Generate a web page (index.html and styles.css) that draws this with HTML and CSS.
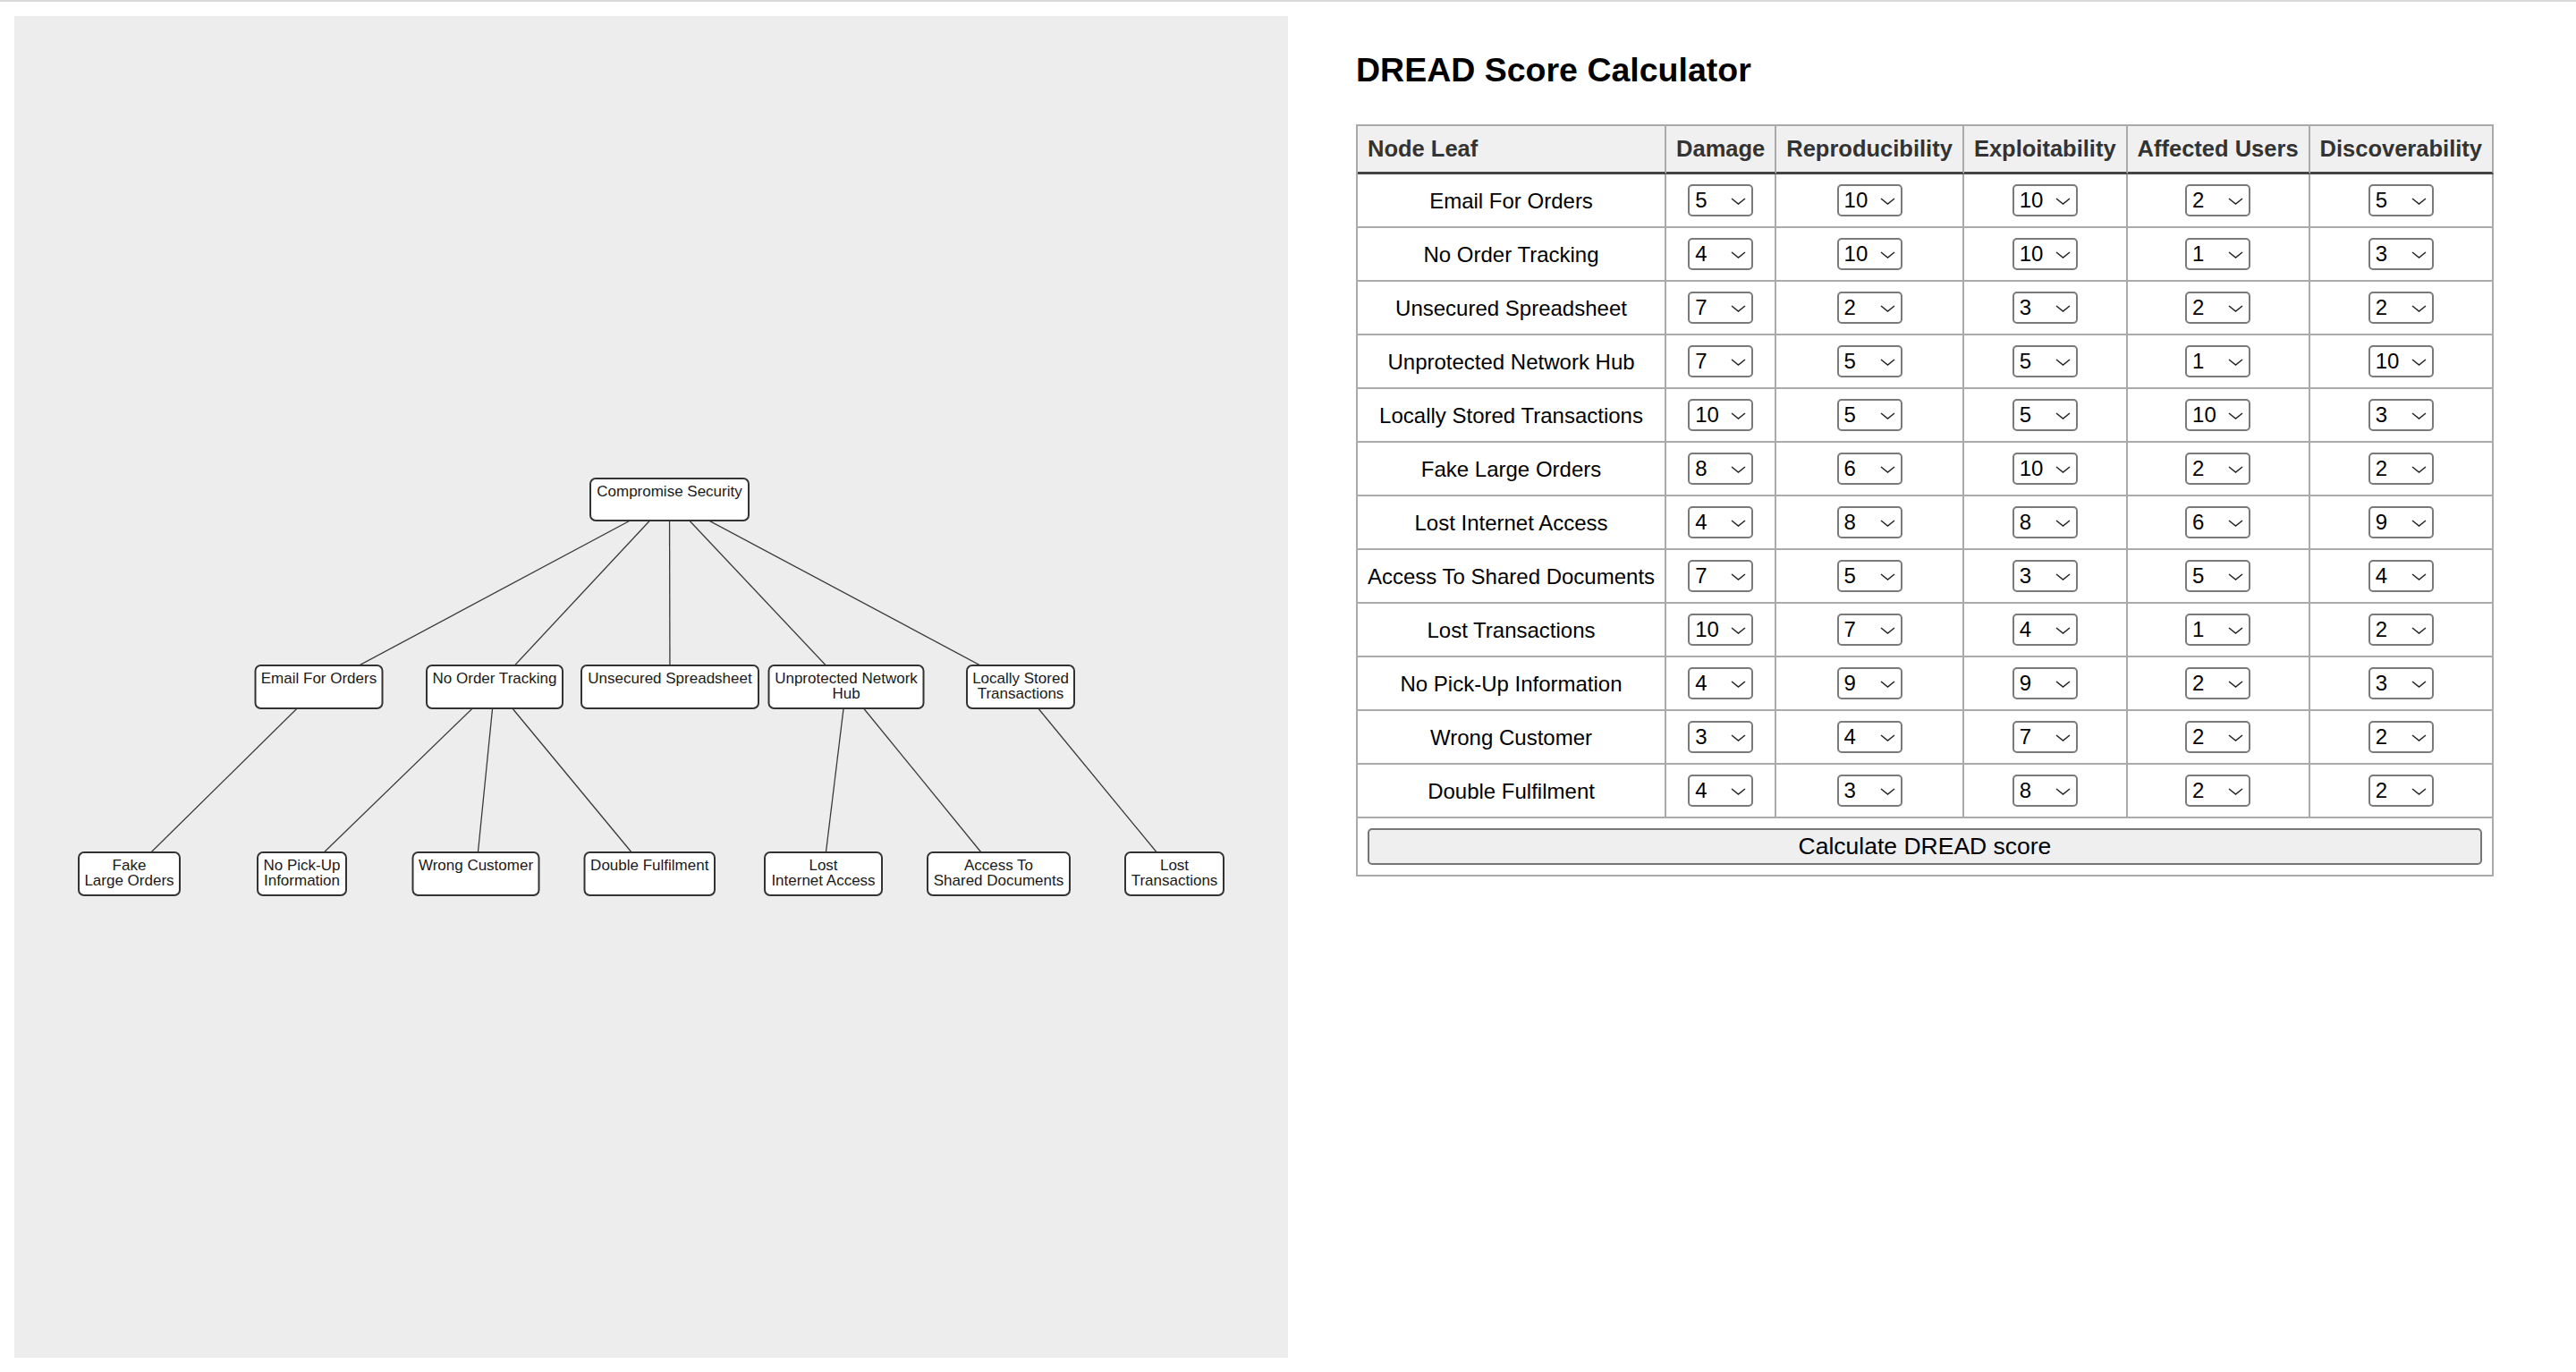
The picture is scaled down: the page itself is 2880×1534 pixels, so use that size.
FILE: index.html
```html
<!DOCTYPE html>
<html lang="en">
<head>
<meta charset="utf-8">
<title>DREAD Score Calculator</title>
<link rel="stylesheet" href="styles.css">
</head>
<body>
<div class="page">
  <section class="tree-panel">
    <svg class="tree" width="1424" height="1500" viewBox="16 18 1424 1500" xmlns="http://www.w3.org/2000/svg">
      <g class="edges">
        <line x1="748.5" y1="558.5" x2="356.5" y2="768"/>
        <line x1="748.5" y1="558.5" x2="553" y2="768"/>
        <line x1="748.5" y1="558.5" x2="749" y2="768"/>
        <line x1="748.5" y1="558.5" x2="946" y2="768"/>
        <line x1="748.5" y1="558.5" x2="1141" y2="768"/>
        <line x1="356.5" y1="768" x2="144.5" y2="977"/>
        <line x1="553" y1="768" x2="337.5" y2="977"/>
        <line x1="553" y1="768" x2="532" y2="977"/>
        <line x1="553" y1="768" x2="726" y2="977"/>
        <line x1="946" y1="768" x2="920.5" y2="977"/>
        <line x1="946" y1="768" x2="1116.5" y2="977"/>
        <line x1="1141" y1="768" x2="1313" y2="977"/>
      </g>
      <g class="nodes">
        <rect x="660" y="535" width="177" height="47" rx="6"/>
        <rect x="285.5" y="744" width="142" height="48" rx="6"/>
        <rect x="477" y="744" width="152" height="48" rx="6"/>
        <rect x="650" y="744" width="198" height="48" rx="6"/>
        <rect x="859.5" y="744" width="173" height="48" rx="6"/>
        <rect x="1081" y="744" width="120" height="48" rx="6"/>
        <rect x="88" y="953" width="113" height="48" rx="6"/>
        <rect x="288" y="953" width="99" height="48" rx="6"/>
        <rect x="461.5" y="953" width="141" height="48" rx="6"/>
        <rect x="653.5" y="953" width="145.5" height="48" rx="6"/>
        <rect x="855" y="953" width="131" height="48" rx="6"/>
        <rect x="1037" y="953" width="159" height="48" rx="6"/>
        <rect x="1258" y="953" width="110" height="48" rx="6"/>
      </g>
      <g class="labels">
        <text x="748.5" y="555">Compromise Security</text>
        <text x="356.5" y="764">Email For Orders</text>
        <text x="553" y="764">No Order Tracking</text>
        <text x="749" y="764">Unsecured Spreadsheet</text>
        <text x="946" y="764"><tspan x="946">Unprotected Network</tspan><tspan x="946" dy="16.5">Hub</tspan></text>
        <text x="1141" y="764"><tspan x="1141">Locally Stored</tspan><tspan x="1141" dy="16.5">Transactions</tspan></text>
        <text x="144.5" y="973"><tspan x="144.5">Fake</tspan><tspan x="144.5" dy="16.5">Large Orders</tspan></text>
        <text x="337.5" y="973"><tspan x="337.5">No Pick-Up</tspan><tspan x="337.5" dy="16.5">Information</tspan></text>
        <text x="532" y="973">Wrong Customer</text>
        <text x="726.25" y="973">Double Fulfilment</text>
        <text x="920.5" y="973"><tspan x="920.5">Lost</tspan><tspan x="920.5" dy="16.5">Internet Access</tspan></text>
        <text x="1116.5" y="973"><tspan x="1116.5">Access To</tspan><tspan x="1116.5" dy="16.5">Shared Documents</tspan></text>
        <text x="1313" y="973"><tspan x="1313">Lost</tspan><tspan x="1313" dy="16.5">Transactions</tspan></text>
      </g>
    </svg>
  </section>

  <section class="calc">
    <h1 class="calc-title">DREAD Score Calculator</h1>
    <table class="dread">
      <thead>
        <tr>
          <th class="th-leaf">Node Leaf</th>
          <th>Damage</th>
          <th>Reproducibility</th>
          <th>Exploitability</th>
          <th>Affected Users</th>
          <th>Discoverability</th>
        </tr>
      </thead>
      <tbody>
        <tr>
          <td>Email For Orders</td>
          <td><span class="sel"><select><option>1</option><option>2</option><option>3</option><option>4</option><option selected>5</option><option>6</option><option>7</option><option>8</option><option>9</option><option>10</option></select><svg class="chev" viewBox="0 0 17 8"><path d="M1 1L8.5 7L16 1"/></svg></span></td>
          <td><span class="sel"><select><option>1</option><option>2</option><option>3</option><option>4</option><option>5</option><option>6</option><option>7</option><option>8</option><option>9</option><option selected>10</option></select><svg class="chev" viewBox="0 0 17 8"><path d="M1 1L8.5 7L16 1"/></svg></span></td>
          <td><span class="sel"><select><option>1</option><option>2</option><option>3</option><option>4</option><option>5</option><option>6</option><option>7</option><option>8</option><option>9</option><option selected>10</option></select><svg class="chev" viewBox="0 0 17 8"><path d="M1 1L8.5 7L16 1"/></svg></span></td>
          <td><span class="sel"><select><option>1</option><option selected>2</option><option>3</option><option>4</option><option>5</option><option>6</option><option>7</option><option>8</option><option>9</option><option>10</option></select><svg class="chev" viewBox="0 0 17 8"><path d="M1 1L8.5 7L16 1"/></svg></span></td>
          <td><span class="sel"><select><option>1</option><option>2</option><option>3</option><option>4</option><option selected>5</option><option>6</option><option>7</option><option>8</option><option>9</option><option>10</option></select><svg class="chev" viewBox="0 0 17 8"><path d="M1 1L8.5 7L16 1"/></svg></span></td>
        </tr>
        <tr>
          <td>No Order Tracking</td>
          <td><span class="sel"><select><option>1</option><option>2</option><option>3</option><option selected>4</option><option>5</option><option>6</option><option>7</option><option>8</option><option>9</option><option>10</option></select><svg class="chev" viewBox="0 0 17 8"><path d="M1 1L8.5 7L16 1"/></svg></span></td>
          <td><span class="sel"><select><option>1</option><option>2</option><option>3</option><option>4</option><option>5</option><option>6</option><option>7</option><option>8</option><option>9</option><option selected>10</option></select><svg class="chev" viewBox="0 0 17 8"><path d="M1 1L8.5 7L16 1"/></svg></span></td>
          <td><span class="sel"><select><option>1</option><option>2</option><option>3</option><option>4</option><option>5</option><option>6</option><option>7</option><option>8</option><option>9</option><option selected>10</option></select><svg class="chev" viewBox="0 0 17 8"><path d="M1 1L8.5 7L16 1"/></svg></span></td>
          <td><span class="sel"><select><option selected>1</option><option>2</option><option>3</option><option>4</option><option>5</option><option>6</option><option>7</option><option>8</option><option>9</option><option>10</option></select><svg class="chev" viewBox="0 0 17 8"><path d="M1 1L8.5 7L16 1"/></svg></span></td>
          <td><span class="sel"><select><option>1</option><option>2</option><option selected>3</option><option>4</option><option>5</option><option>6</option><option>7</option><option>8</option><option>9</option><option>10</option></select><svg class="chev" viewBox="0 0 17 8"><path d="M1 1L8.5 7L16 1"/></svg></span></td>
        </tr>
        <tr>
          <td>Unsecured Spreadsheet</td>
          <td><span class="sel"><select><option>1</option><option>2</option><option>3</option><option>4</option><option>5</option><option>6</option><option selected>7</option><option>8</option><option>9</option><option>10</option></select><svg class="chev" viewBox="0 0 17 8"><path d="M1 1L8.5 7L16 1"/></svg></span></td>
          <td><span class="sel"><select><option>1</option><option selected>2</option><option>3</option><option>4</option><option>5</option><option>6</option><option>7</option><option>8</option><option>9</option><option>10</option></select><svg class="chev" viewBox="0 0 17 8"><path d="M1 1L8.5 7L16 1"/></svg></span></td>
          <td><span class="sel"><select><option>1</option><option>2</option><option selected>3</option><option>4</option><option>5</option><option>6</option><option>7</option><option>8</option><option>9</option><option>10</option></select><svg class="chev" viewBox="0 0 17 8"><path d="M1 1L8.5 7L16 1"/></svg></span></td>
          <td><span class="sel"><select><option>1</option><option selected>2</option><option>3</option><option>4</option><option>5</option><option>6</option><option>7</option><option>8</option><option>9</option><option>10</option></select><svg class="chev" viewBox="0 0 17 8"><path d="M1 1L8.5 7L16 1"/></svg></span></td>
          <td><span class="sel"><select><option>1</option><option selected>2</option><option>3</option><option>4</option><option>5</option><option>6</option><option>7</option><option>8</option><option>9</option><option>10</option></select><svg class="chev" viewBox="0 0 17 8"><path d="M1 1L8.5 7L16 1"/></svg></span></td>
        </tr>
        <tr>
          <td>Unprotected Network Hub</td>
          <td><span class="sel"><select><option>1</option><option>2</option><option>3</option><option>4</option><option>5</option><option>6</option><option selected>7</option><option>8</option><option>9</option><option>10</option></select><svg class="chev" viewBox="0 0 17 8"><path d="M1 1L8.5 7L16 1"/></svg></span></td>
          <td><span class="sel"><select><option>1</option><option>2</option><option>3</option><option>4</option><option selected>5</option><option>6</option><option>7</option><option>8</option><option>9</option><option>10</option></select><svg class="chev" viewBox="0 0 17 8"><path d="M1 1L8.5 7L16 1"/></svg></span></td>
          <td><span class="sel"><select><option>1</option><option>2</option><option>3</option><option>4</option><option selected>5</option><option>6</option><option>7</option><option>8</option><option>9</option><option>10</option></select><svg class="chev" viewBox="0 0 17 8"><path d="M1 1L8.5 7L16 1"/></svg></span></td>
          <td><span class="sel"><select><option selected>1</option><option>2</option><option>3</option><option>4</option><option>5</option><option>6</option><option>7</option><option>8</option><option>9</option><option>10</option></select><svg class="chev" viewBox="0 0 17 8"><path d="M1 1L8.5 7L16 1"/></svg></span></td>
          <td><span class="sel"><select><option>1</option><option>2</option><option>3</option><option>4</option><option>5</option><option>6</option><option>7</option><option>8</option><option>9</option><option selected>10</option></select><svg class="chev" viewBox="0 0 17 8"><path d="M1 1L8.5 7L16 1"/></svg></span></td>
        </tr>
        <tr>
          <td>Locally Stored Transactions</td>
          <td><span class="sel"><select><option>1</option><option>2</option><option>3</option><option>4</option><option>5</option><option>6</option><option>7</option><option>8</option><option>9</option><option selected>10</option></select><svg class="chev" viewBox="0 0 17 8"><path d="M1 1L8.5 7L16 1"/></svg></span></td>
          <td><span class="sel"><select><option>1</option><option>2</option><option>3</option><option>4</option><option selected>5</option><option>6</option><option>7</option><option>8</option><option>9</option><option>10</option></select><svg class="chev" viewBox="0 0 17 8"><path d="M1 1L8.5 7L16 1"/></svg></span></td>
          <td><span class="sel"><select><option>1</option><option>2</option><option>3</option><option>4</option><option selected>5</option><option>6</option><option>7</option><option>8</option><option>9</option><option>10</option></select><svg class="chev" viewBox="0 0 17 8"><path d="M1 1L8.5 7L16 1"/></svg></span></td>
          <td><span class="sel"><select><option>1</option><option>2</option><option>3</option><option>4</option><option>5</option><option>6</option><option>7</option><option>8</option><option>9</option><option selected>10</option></select><svg class="chev" viewBox="0 0 17 8"><path d="M1 1L8.5 7L16 1"/></svg></span></td>
          <td><span class="sel"><select><option>1</option><option>2</option><option selected>3</option><option>4</option><option>5</option><option>6</option><option>7</option><option>8</option><option>9</option><option>10</option></select><svg class="chev" viewBox="0 0 17 8"><path d="M1 1L8.5 7L16 1"/></svg></span></td>
        </tr>
        <tr>
          <td>Fake Large Orders</td>
          <td><span class="sel"><select><option>1</option><option>2</option><option>3</option><option>4</option><option>5</option><option>6</option><option>7</option><option selected>8</option><option>9</option><option>10</option></select><svg class="chev" viewBox="0 0 17 8"><path d="M1 1L8.5 7L16 1"/></svg></span></td>
          <td><span class="sel"><select><option>1</option><option>2</option><option>3</option><option>4</option><option>5</option><option selected>6</option><option>7</option><option>8</option><option>9</option><option>10</option></select><svg class="chev" viewBox="0 0 17 8"><path d="M1 1L8.5 7L16 1"/></svg></span></td>
          <td><span class="sel"><select><option>1</option><option>2</option><option>3</option><option>4</option><option>5</option><option>6</option><option>7</option><option>8</option><option>9</option><option selected>10</option></select><svg class="chev" viewBox="0 0 17 8"><path d="M1 1L8.5 7L16 1"/></svg></span></td>
          <td><span class="sel"><select><option>1</option><option selected>2</option><option>3</option><option>4</option><option>5</option><option>6</option><option>7</option><option>8</option><option>9</option><option>10</option></select><svg class="chev" viewBox="0 0 17 8"><path d="M1 1L8.5 7L16 1"/></svg></span></td>
          <td><span class="sel"><select><option>1</option><option selected>2</option><option>3</option><option>4</option><option>5</option><option>6</option><option>7</option><option>8</option><option>9</option><option>10</option></select><svg class="chev" viewBox="0 0 17 8"><path d="M1 1L8.5 7L16 1"/></svg></span></td>
        </tr>
        <tr>
          <td>Lost Internet Access</td>
          <td><span class="sel"><select><option>1</option><option>2</option><option>3</option><option selected>4</option><option>5</option><option>6</option><option>7</option><option>8</option><option>9</option><option>10</option></select><svg class="chev" viewBox="0 0 17 8"><path d="M1 1L8.5 7L16 1"/></svg></span></td>
          <td><span class="sel"><select><option>1</option><option>2</option><option>3</option><option>4</option><option>5</option><option>6</option><option>7</option><option selected>8</option><option>9</option><option>10</option></select><svg class="chev" viewBox="0 0 17 8"><path d="M1 1L8.5 7L16 1"/></svg></span></td>
          <td><span class="sel"><select><option>1</option><option>2</option><option>3</option><option>4</option><option>5</option><option>6</option><option>7</option><option selected>8</option><option>9</option><option>10</option></select><svg class="chev" viewBox="0 0 17 8"><path d="M1 1L8.5 7L16 1"/></svg></span></td>
          <td><span class="sel"><select><option>1</option><option>2</option><option>3</option><option>4</option><option>5</option><option selected>6</option><option>7</option><option>8</option><option>9</option><option>10</option></select><svg class="chev" viewBox="0 0 17 8"><path d="M1 1L8.5 7L16 1"/></svg></span></td>
          <td><span class="sel"><select><option>1</option><option>2</option><option>3</option><option>4</option><option>5</option><option>6</option><option>7</option><option>8</option><option selected>9</option><option>10</option></select><svg class="chev" viewBox="0 0 17 8"><path d="M1 1L8.5 7L16 1"/></svg></span></td>
        </tr>
        <tr>
          <td>Access To Shared Documents</td>
          <td><span class="sel"><select><option>1</option><option>2</option><option>3</option><option>4</option><option>5</option><option>6</option><option selected>7</option><option>8</option><option>9</option><option>10</option></select><svg class="chev" viewBox="0 0 17 8"><path d="M1 1L8.5 7L16 1"/></svg></span></td>
          <td><span class="sel"><select><option>1</option><option>2</option><option>3</option><option>4</option><option selected>5</option><option>6</option><option>7</option><option>8</option><option>9</option><option>10</option></select><svg class="chev" viewBox="0 0 17 8"><path d="M1 1L8.5 7L16 1"/></svg></span></td>
          <td><span class="sel"><select><option>1</option><option>2</option><option selected>3</option><option>4</option><option>5</option><option>6</option><option>7</option><option>8</option><option>9</option><option>10</option></select><svg class="chev" viewBox="0 0 17 8"><path d="M1 1L8.5 7L16 1"/></svg></span></td>
          <td><span class="sel"><select><option>1</option><option>2</option><option>3</option><option>4</option><option selected>5</option><option>6</option><option>7</option><option>8</option><option>9</option><option>10</option></select><svg class="chev" viewBox="0 0 17 8"><path d="M1 1L8.5 7L16 1"/></svg></span></td>
          <td><span class="sel"><select><option>1</option><option>2</option><option>3</option><option selected>4</option><option>5</option><option>6</option><option>7</option><option>8</option><option>9</option><option>10</option></select><svg class="chev" viewBox="0 0 17 8"><path d="M1 1L8.5 7L16 1"/></svg></span></td>
        </tr>
        <tr>
          <td>Lost Transactions</td>
          <td><span class="sel"><select><option>1</option><option>2</option><option>3</option><option>4</option><option>5</option><option>6</option><option>7</option><option>8</option><option>9</option><option selected>10</option></select><svg class="chev" viewBox="0 0 17 8"><path d="M1 1L8.5 7L16 1"/></svg></span></td>
          <td><span class="sel"><select><option>1</option><option>2</option><option>3</option><option>4</option><option>5</option><option>6</option><option selected>7</option><option>8</option><option>9</option><option>10</option></select><svg class="chev" viewBox="0 0 17 8"><path d="M1 1L8.5 7L16 1"/></svg></span></td>
          <td><span class="sel"><select><option>1</option><option>2</option><option>3</option><option selected>4</option><option>5</option><option>6</option><option>7</option><option>8</option><option>9</option><option>10</option></select><svg class="chev" viewBox="0 0 17 8"><path d="M1 1L8.5 7L16 1"/></svg></span></td>
          <td><span class="sel"><select><option selected>1</option><option>2</option><option>3</option><option>4</option><option>5</option><option>6</option><option>7</option><option>8</option><option>9</option><option>10</option></select><svg class="chev" viewBox="0 0 17 8"><path d="M1 1L8.5 7L16 1"/></svg></span></td>
          <td><span class="sel"><select><option>1</option><option selected>2</option><option>3</option><option>4</option><option>5</option><option>6</option><option>7</option><option>8</option><option>9</option><option>10</option></select><svg class="chev" viewBox="0 0 17 8"><path d="M1 1L8.5 7L16 1"/></svg></span></td>
        </tr>
        <tr>
          <td>No Pick-Up Information</td>
          <td><span class="sel"><select><option>1</option><option>2</option><option>3</option><option selected>4</option><option>5</option><option>6</option><option>7</option><option>8</option><option>9</option><option>10</option></select><svg class="chev" viewBox="0 0 17 8"><path d="M1 1L8.5 7L16 1"/></svg></span></td>
          <td><span class="sel"><select><option>1</option><option>2</option><option>3</option><option>4</option><option>5</option><option>6</option><option>7</option><option>8</option><option selected>9</option><option>10</option></select><svg class="chev" viewBox="0 0 17 8"><path d="M1 1L8.5 7L16 1"/></svg></span></td>
          <td><span class="sel"><select><option>1</option><option>2</option><option>3</option><option>4</option><option>5</option><option>6</option><option>7</option><option>8</option><option selected>9</option><option>10</option></select><svg class="chev" viewBox="0 0 17 8"><path d="M1 1L8.5 7L16 1"/></svg></span></td>
          <td><span class="sel"><select><option>1</option><option selected>2</option><option>3</option><option>4</option><option>5</option><option>6</option><option>7</option><option>8</option><option>9</option><option>10</option></select><svg class="chev" viewBox="0 0 17 8"><path d="M1 1L8.5 7L16 1"/></svg></span></td>
          <td><span class="sel"><select><option>1</option><option>2</option><option selected>3</option><option>4</option><option>5</option><option>6</option><option>7</option><option>8</option><option>9</option><option>10</option></select><svg class="chev" viewBox="0 0 17 8"><path d="M1 1L8.5 7L16 1"/></svg></span></td>
        </tr>
        <tr>
          <td>Wrong Customer</td>
          <td><span class="sel"><select><option>1</option><option>2</option><option selected>3</option><option>4</option><option>5</option><option>6</option><option>7</option><option>8</option><option>9</option><option>10</option></select><svg class="chev" viewBox="0 0 17 8"><path d="M1 1L8.5 7L16 1"/></svg></span></td>
          <td><span class="sel"><select><option>1</option><option>2</option><option>3</option><option selected>4</option><option>5</option><option>6</option><option>7</option><option>8</option><option>9</option><option>10</option></select><svg class="chev" viewBox="0 0 17 8"><path d="M1 1L8.5 7L16 1"/></svg></span></td>
          <td><span class="sel"><select><option>1</option><option>2</option><option>3</option><option>4</option><option>5</option><option>6</option><option selected>7</option><option>8</option><option>9</option><option>10</option></select><svg class="chev" viewBox="0 0 17 8"><path d="M1 1L8.5 7L16 1"/></svg></span></td>
          <td><span class="sel"><select><option>1</option><option selected>2</option><option>3</option><option>4</option><option>5</option><option>6</option><option>7</option><option>8</option><option>9</option><option>10</option></select><svg class="chev" viewBox="0 0 17 8"><path d="M1 1L8.5 7L16 1"/></svg></span></td>
          <td><span class="sel"><select><option>1</option><option selected>2</option><option>3</option><option>4</option><option>5</option><option>6</option><option>7</option><option>8</option><option>9</option><option>10</option></select><svg class="chev" viewBox="0 0 17 8"><path d="M1 1L8.5 7L16 1"/></svg></span></td>
        </tr>
        <tr>
          <td>Double Fulfilment</td>
          <td><span class="sel"><select><option>1</option><option>2</option><option>3</option><option selected>4</option><option>5</option><option>6</option><option>7</option><option>8</option><option>9</option><option>10</option></select><svg class="chev" viewBox="0 0 17 8"><path d="M1 1L8.5 7L16 1"/></svg></span></td>
          <td><span class="sel"><select><option>1</option><option>2</option><option selected>3</option><option>4</option><option>5</option><option>6</option><option>7</option><option>8</option><option>9</option><option>10</option></select><svg class="chev" viewBox="0 0 17 8"><path d="M1 1L8.5 7L16 1"/></svg></span></td>
          <td><span class="sel"><select><option>1</option><option>2</option><option>3</option><option>4</option><option>5</option><option>6</option><option>7</option><option selected>8</option><option>9</option><option>10</option></select><svg class="chev" viewBox="0 0 17 8"><path d="M1 1L8.5 7L16 1"/></svg></span></td>
          <td><span class="sel"><select><option>1</option><option selected>2</option><option>3</option><option>4</option><option>5</option><option>6</option><option>7</option><option>8</option><option>9</option><option>10</option></select><svg class="chev" viewBox="0 0 17 8"><path d="M1 1L8.5 7L16 1"/></svg></span></td>
          <td><span class="sel"><select><option>1</option><option selected>2</option><option>3</option><option>4</option><option>5</option><option>6</option><option>7</option><option>8</option><option>9</option><option>10</option></select><svg class="chev" viewBox="0 0 17 8"><path d="M1 1L8.5 7L16 1"/></svg></span></td>
        </tr>
        <tr class="action-row">
          <td colspan="6"><button type="button" class="calc-btn">Calculate DREAD score</button></td>
        </tr>
      </tbody>
    </table>
  </section>
</div>
</body>
</html>
```
FILE: styles.css
```css
html, body {
  margin: 0;
  padding: 0;
  background: #ffffff;
}

body {
  border-top: 2px solid #d9d9d9;
  font-family: "Liberation Sans", Arial, Helvetica, sans-serif;
  color: #000;
}

.page {
  display: flex;
  align-items: flex-start;
}

.tree-panel {
  flex: 0 0 auto;
  width: 1424px;
  height: 1500px;
  margin: 16px 0 0 16px;
  background: #ededed;
}

.tree {
  display: block;
}

.edges line {
  stroke: #3a3a3a;
  stroke-width: 1.3;
}

.nodes rect {
  fill: #ffffff;
  stroke: #333333;
  stroke-width: 2;
}

.labels text {
  font-family: "Liberation Sans", Arial, sans-serif;
  font-size: 17px;
  fill: #1a1a1a;
  text-anchor: middle;
}

.calc {
  flex: 0 0 auto;
  padding: 55px 0 0 76px;
}

.calc-title {
  margin: 0 0 39px;
  font-size: 37.5px;
  line-height: 43px;
  font-weight: bold;
  color: #000;
}

.dread {
  border-collapse: separate;
  border-spacing: 0;
  border-top: 2px solid #aaaaaa;
  border-left: 2px solid #aaaaaa;
}

.dread th,
.dread td {
  border-right: 2px solid #aaaaaa;
  border-bottom: 2px solid #aaaaaa;
}

.dread th {
  background: #f0f0f0;
  color: #333;
  font-size: 25.5px;
  font-weight: bold;
  line-height: 31px;
  padding: 10px 11px;
  text-align: center;
  white-space: nowrap;
  border-bottom: 3px solid #444444;
}

.dread th.th-leaf {
  text-align: left;
}

.dread td {
  font-size: 24px;
  line-height: 27px;
  padding: 11px;
  text-align: center;
  vertical-align: middle;
  white-space: nowrap;
}

.sel {
  position: relative;
  display: block;
  width: 73px;
  height: 36px;
  margin: 0 auto;
}

.sel select {
  appearance: none;
  -webkit-appearance: none;
  display: block;
  box-sizing: border-box;
  width: 73px;
  height: 36px;
  margin: 0;
  padding: 0 0 0 6px;
  border: 2px solid #7a7a7a;
  border-radius: 5px;
  background: #ffffff;
  color: #000;
  font-family: "Liberation Sans", Arial, sans-serif;
  font-size: 24px;
  line-height: 32px;
  text-align: left;
}

.chev {
  position: absolute;
  right: 8px;
  top: 15px;
  width: 17px;
  height: 8px;
  pointer-events: none;
}

.chev path {
  fill: none;
  stroke: #222;
  stroke-width: 1.5;
}

.action-row td {
  padding: 11px;
}

.calc-btn {
  display: block;
  box-sizing: border-box;
  width: 100%;
  height: 41px;
  margin: 0;
  padding: 0;
  border: 2px solid #767676;
  border-radius: 5px;
  background: #efefef;
  color: #000;
  font-family: "Liberation Sans", Arial, sans-serif;
  font-size: 26.5px;
  line-height: 37px;
}
```
